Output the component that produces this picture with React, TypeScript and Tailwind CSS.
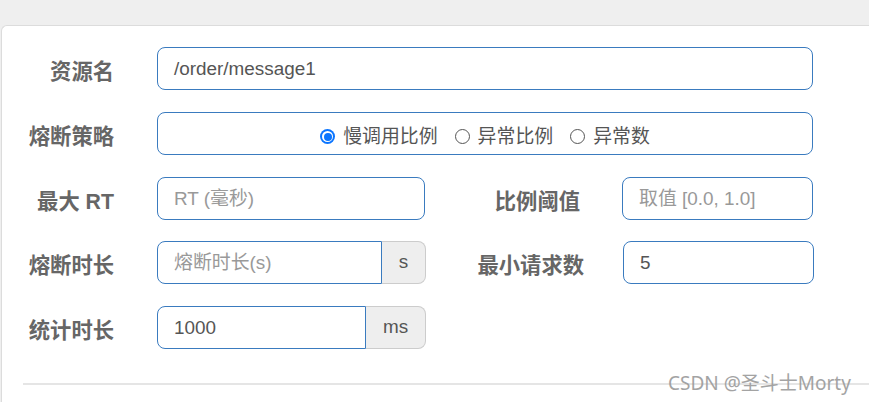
const font = 'font-["Liberation_Sans","Noto_Sans_CJK_SC",sans-serif]';

function Label({ text, className = '' }: { text: string; className?: string }) {
  return (
    <div className={`text-right font-bold text-[21.3px] text-[#666] pt-[10px] ${className}`}>{text}</div>
  );
}

function Input({ value, placeholder, className = '' }: { value?: string; placeholder?: string; className?: string }) {
  return (
    <div
      className={`h-[43px] flex items-center px-[16px] pt-[2px] border border-[#3a7bbf] bg-white text-[18.9px] ${
        value ? 'text-[#555]' : 'text-[#999]'
      } ${className}`}
    >
      {value || placeholder}
    </div>
  );
}

function Addon({ text, className = '' }: { text: string; className?: string }) {
  return (
    <div
      className={`h-[43px] flex items-center justify-center bg-[#eeeeee] border border-l-0 border-[#cccccc] rounded-r-[8px] text-[18.9px] text-[#555] ${className}`}
    >
      {text}
    </div>
  );
}

function Radio({ checked, text }: { checked?: boolean; text: string }) {
  return (
    <div className="flex items-center gap-[8px]">
      {checked ? (
        <span className="w-[15px] h-[15px] rounded-full bg-[#0b75ff] flex items-center justify-center">
          <span className="w-[11px] h-[11px] rounded-full bg-white flex items-center justify-center">
            <span className="w-[8px] h-[8px] rounded-full bg-[#0b75ff]" />
          </span>
        </span>
      ) : (
        <span className="w-[15px] h-[15px] rounded-full border border-[#555] bg-white" />
      )}
      <span className="text-[18.9px] text-[#555]">{text}</span>
    </div>
  );
}

export default function App() {
  return (
    <div className={`w-[869px] h-[402px] overflow-hidden bg-[#efefef] pt-[25px] pl-[1px] ${font}`}>
      <div className="relative h-full bg-white border-t border-l border-[#dcdcdc] rounded-tl-[6px] pt-[21px]">
        {/* 资源名 */}
        <div className="flex">
          <Label text="资源名" className="w-[112px]" />
          <Input value="/order/message1" className="ml-[43px] w-[656px] rounded-[8px]" />
        </div>

        {/* 熔断策略 */}
        <div className="flex mt-[22px]">
          <Label text="熔断策略" className="w-[112px]" />
          <div className="ml-[43px] w-[656px] h-[43px] border border-[#3a7bbf] rounded-[8px] flex items-center justify-center gap-[17px] pt-[7px]">
            <Radio checked text="慢调用比例" />
            <Radio text="异常比例" />
            <Radio text="异常数" />
          </div>
        </div>

        {/* 最大 RT / 比例阈值 */}
        <div className="flex mt-[22px]">
          <Label text="最大 RT" className="w-[112px]" />
          <Input placeholder="RT (毫秒)" className="ml-[43px] w-[268px] rounded-[8px]" />
          <Label text="比例阈值" className="w-[155px]" />
          <Input placeholder="取值 [0.0, 1.0]" className="ml-[42px] w-[191px] rounded-[8px]" />
        </div>

        {/* 熔断时长 / 最小请求数 */}
        <div className="flex mt-[21px]">
          <Label text="熔断时长" className="w-[112px]" />
          <div className="ml-[43px] flex">
            <Input placeholder="熔断时长(s)" className="w-[225px] rounded-l-[8px]" />
            <Addon text="s" className="w-[44px]" />
          </div>
          <Label text="最小请求数" className="w-[158px]" />
          <Input value="5" className="ml-[39px] w-[191px] rounded-[8px]" />
        </div>

        {/* 统计时长 */}
        <div className="flex mt-[22px]">
          <Label text="统计时长" className="w-[112px]" />
          <div className="ml-[43px] flex">
            <Input value="1000" className="w-[209px] rounded-l-[8px]" />
            <Addon text="ms" className="w-[60px]" />
          </div>
        </div>

        <div className="ml-[21px] mt-[34px] h-[2px] bg-[#e5e5e5]" />

        <div className='absolute left-[666px] top-[343px] text-[19px] text-[#9a9a9a] font-["Noto_Sans","Noto_Sans_CJK_SC",sans-serif] opacity-90'>
          CSDN @圣斗士Morty
        </div>
      </div>
    </div>
  );
}
